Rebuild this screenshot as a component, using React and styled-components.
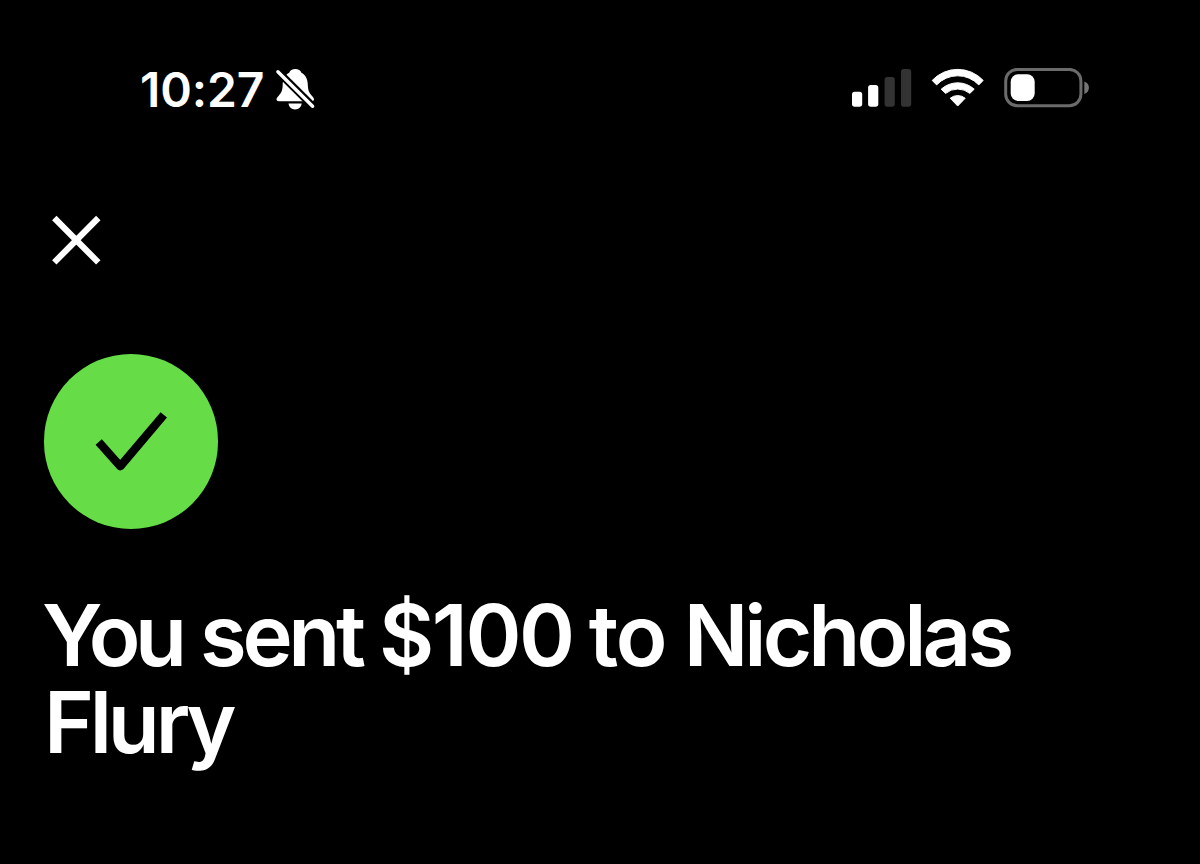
import React from 'react';
import styled, { createGlobalStyle } from 'styled-components';

const GlobalStyle = createGlobalStyle`
  * {
    box-sizing: border-box;
  }
  body {
    margin: 0;
    background: #000;
    color: #fff;
    font-family: Inter, 'Liberation Sans', sans-serif;
  }
`;

const Screen = styled.main`
  width: 1200px;
  height: 864px;
  padding: 58px 44px 0;
  overflow: hidden;
  background: #000;
`;

const StatusBar = styled.header`
  display: flex;
  justify-content: space-between;
  align-items: center;
  height: 60px;
  padding: 0 66px 0 96px;
`;

const StatusGroup = styled.div`
  display: flex;
  align-items: center;
  gap: ${({ $gap }) => $gap}px;
  padding-top: ${({ $top }) => $top || 0}px;
`;

const Clock = styled.time`
  width: 126px;
  padding-top: 2px;
  font-size: 48px;
  font-weight: 600;
  line-height: 58px;
  letter-spacing: -0.1px;
  white-space: nowrap;
`;

const Icon = styled.svg`
  display: block;
  flex: none;
`;

const CloseButton = styled.button`
  display: block;
  width: 64px;
  height: 64px;
  margin-top: 90px;
  padding: 0;
  border: 0;
  background: none;
  color: inherit;
`;

const SuccessBadge = styled.div`
  width: 174.6px;
  height: 174.6px;
  margin: 82.4px 0 0 -0.4px;
  border-radius: 50%;
  background: #66dd47;
`;

const Title = styled.h1`
  margin: 62.6px 0 0;
  font-size: 85px;
  font-weight: 600;
  line-height: 87px;
  letter-spacing: -2.5px;
`;

const Word = styled.span`
  margin-left: ${({ $shift }) => $shift || 0}px;
  letter-spacing: ${({ $spacing }) => $spacing}px;
`;

function BellOffIcon() {
  return (
    <Icon width="42" height="46" viewBox="0 0 42 46">
      <path
        d="M20.300 3C17.300 3 15 4.300 14.200 6.700C10.500 8.500 7.800 12.500 7.700 18.500c-.1 6-1.200 8-4 11.200C2.400 31.200 1.500 32 1.500 33.300c0 1.300.9 2 2.300 2h33c1.400 0 2.200-.7 2.200-2 0-1.300-.9-2.100-2.200-3.600-2.800-3.200-3.800-5.200-4-11.200C32.700 12.500 30.100 8.500 26.400 6.700C25.600 4.300 23.300 3 20.300 3z"
        fill="#fff"
      />
      <path d="M13.500 37.500h13.200c-.5 3.600-3 5.900-6.600 5.900s-6.100-2.300-6.600-5.900z" fill="#fff" />
      <path d="M1 3.600l41 40.800" stroke="#000" strokeWidth="7.600" />
      <path d="M2.900 5.700l34.700 34.500" stroke="#fff" strokeWidth="3.400" strokeLinecap="round" />
    </Icon>
  );
}

function SignalIcon() {
  return (
    <Icon width="60" height="40" viewBox="0 0 60 40">
      <rect x="0" y="23.700" width="10.200" height="15" rx="2.700" fill="#fff" />
      <rect x="16.100" y="17" width="10.200" height="21.700" rx="2.700" fill="#fff" />
      <rect x="32.600" y="9" width="10.200" height="29.700" rx="2.700" fill="#333" />
      <rect x="49" y="1" width="10.200" height="37.700" rx="2.700" fill="#333" />
    </Icon>
  );
}

function WifiIcon() {
  return (
    <Icon width="54" height="40" viewBox="0 0 54 40" fill="#fff" stroke="#fff" strokeLinejoin="round">
      <path d="M1.200 12.400A35 35 0 0 1 52.200 12.400L47.800 16.900A29 29 0 0 0 5.600 16.900Z" />
      <path d="M10.200 21.200A24.500 24.500 0 0 1 43.200 21.200L38.800 25.400A19 19 0 0 0 14.600 25.400Z" />
      <path d="M19.200 30.200A12 12 0 0 1 34.200 30.200L26.700 38.000Z" />
    </Icon>
  );
}

function BatteryIcon() {
  return (
    <Icon width="86" height="40" viewBox="0 0 86 40">
      <rect x="1.700" y="1.400" width="75.200" height="36.300" rx="11.500" fill="none" stroke="#6b6b6b" strokeWidth="3" />
      <rect x="6.700" y="6.300" width="24" height="26.700" rx="7.500" fill="#fff" />
      <path d="M80.300 13.600c2.900.8 4.600 3.200 4.600 6.200s-1.700 5.300-4.600 6.200z" fill="#757575" />
    </Icon>
  );
}

export default function App() {
  return (
    <>
      <GlobalStyle />
      <Screen>
        <StatusBar>
          <StatusGroup $gap={9} $top={2}>
            <Clock>10:27</Clock>
            <BellOffIcon />
          </StatusGroup>
          <StatusGroup $gap={19}>
            <SignalIcon />
            <WifiIcon />
            <BatteryIcon />
          </StatusGroup>
        </StatusBar>
        <CloseButton aria-label="Close">
          <Icon width="64" height="64" viewBox="0 0 64 64" stroke="#fff" strokeWidth="6.200">
            <path d="M10.300 10l44 44.400M54.300 10l-44 44.400" />
          </Icon>
        </CloseButton>
        <SuccessBadge>
          <Icon width="175" height="175" viewBox="0 0 175 175" fill="none">
            <path
              d="M54.700 88L76.300 112.200L119.800 60.900"
              stroke="#000"
              strokeWidth="8.400"
              strokeLinejoin="round"
            />
          </Icon>
        </SuccessBadge>
        <Title>
          <Word $shift={-2} $spacing={-5.5}>You</Word>{' '}
          <Word $shift={-0.5} $spacing={-4.3}>sent</Word>{' '}
          <Word $shift={-1.7} $spacing={-2.4}>$100</Word>{' '}
          <Word $shift={-3} $spacing={-2.2}>to</Word>{' '}
          <Word $shift={-0.5} $spacing={-3.9}>Nicholas</Word>
          <br />
          <Word $shift={0} $spacing={-4.2}>Flury</Word>
        </Title>
      </Screen>
    </>
  );
}
